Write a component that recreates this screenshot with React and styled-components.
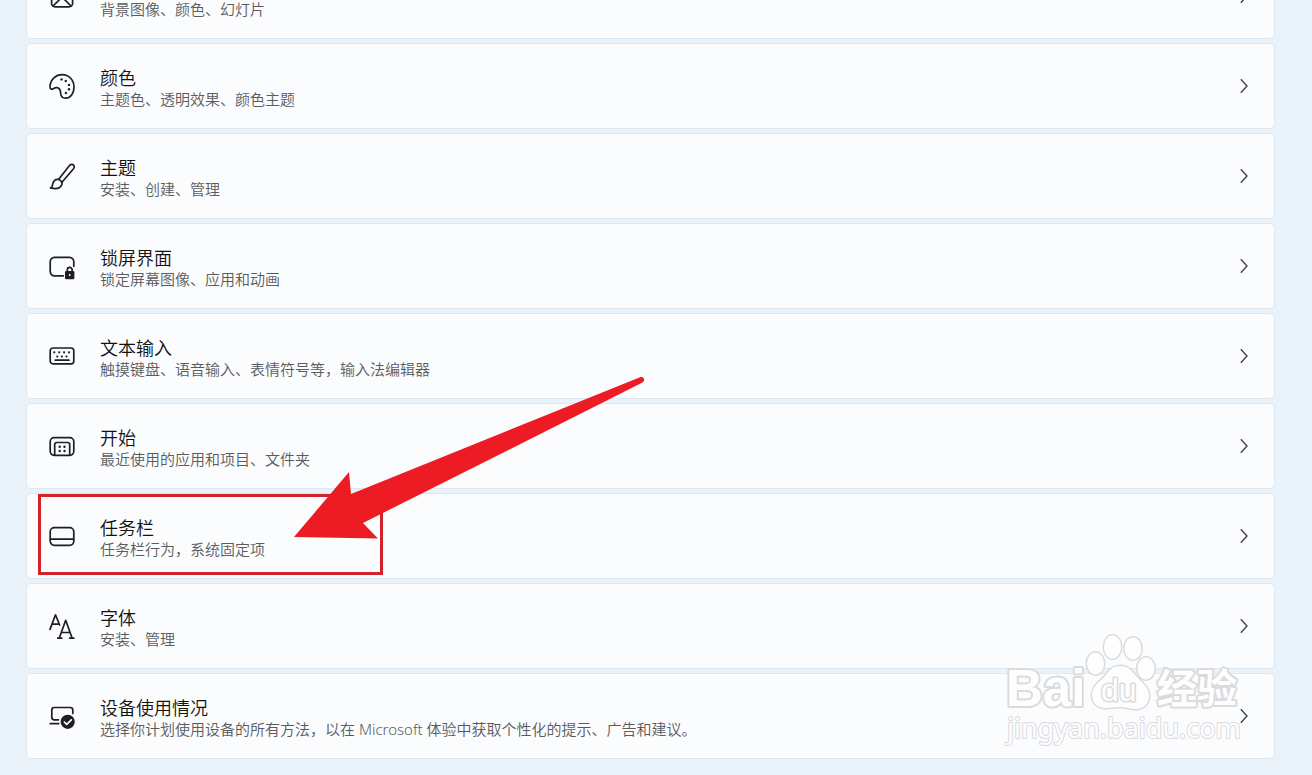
import React from "react";
import styled, { createGlobalStyle } from "styled-components";

const GlobalStyle = createGlobalStyle`
  *, *::before, *::after { box-sizing: border-box; }
  html { background: #ebf3fa; }
  body {
    margin: 0;
    overflow: hidden;
    background: #ebf3fa;
    font-family: "Noto Sans", "Noto Sans CJK SC", sans-serif;
  }
`;

const Page = styled.main`
  padding: 0 37px 16px 26px;
`;

/* The list is scrolled so that its first row is partly out of view. */
const SettingsList = styled.ul`
  display: flex;
  flex-direction: column;
  gap: 4px;
  margin: -47px 0 0;
  padding: 0;
  list-style: none;
`;

const Item = styled.li`
  position: relative;
`;

const Row = styled.button`
  display: flex;
  align-items: center;
  gap: 24px;
  width: 100%;
  min-height: 86px;
  padding: 0 26px 0 21px;
  border: 1px solid #e0e8ef;
  border-radius: 5px;
  background: #fbfcfe;
  color: #111111;
  font: inherit;
  text-align: left;
`;

const Icon = styled.svg`
  flex: none;
  width: 28px;
  height: 28px;
  fill: none;
  stroke: #1d1f22;
  stroke-width: 1.7;
  stroke-linecap: round;
  stroke-linejoin: round;

  .solid {
    fill: #1d1f22;
    stroke: none;
  }
`;

const Texts = styled.span`
  display: flex;
  flex: 1;
  flex-direction: column;
  min-width: 0;
  padding-top: 4px;
`;

const Title = styled.span`
  font-size: 18px;
  font-weight: 350;
  line-height: 22px;
`;

const Description = styled.span`
  color: #5a5b5d;
  font-size: 15px;
  font-weight: 350;
  line-height: 20px;
`;

const Chevron = styled.svg`
  flex: none;
  width: 8px;
  height: 16px;
  fill: none;
  stroke: #444648;
  stroke-width: 1.4;
`;

const Highlight = styled.span`
  position: absolute;
  top: 1px;
  left: 12px;
  width: 345px;
  height: 81px;
  border: 3px solid #d2232a;
  pointer-events: none;
`;

const Arrow = styled.svg`
  position: absolute;
  top: -118px;
  left: 264px;
  width: 360px;
  height: 170px;
  fill: #ed1c24;
  pointer-events: none;
`;

const Watermark = styled.svg`
  position: absolute;
  right: 25px;
  bottom: 4px;
  width: 250px;
  height: 130px;
  fill: #fefeff;
  stroke: #d9dbdd;
  stroke-width: 3;
  stroke-linejoin: round;
  paint-order: stroke;
  pointer-events: none;

  .brand {
    font: 700 51px "Liberation Sans", sans-serif;
    stroke-width: 4;
  }
  .inner {
    font: 400 32px "Liberation Sans", sans-serif;
    stroke-width: 3;
  }
  .section {
    font: 700 40px "Noto Sans CJK SC", sans-serif;
    stroke-width: 4;
  }
  .site {
    font: 400 27px "Noto Sans", sans-serif;
    stroke-width: 2;
  }
`;

const Dots = ({ points, r = 1.1 }) =>
  points.map(([x, y]) => <circle key={`${x}-${y}`} className="solid" cx={x} cy={y} r={r} />);

const icons = {
  background: (
    <>
      <rect x="3.6" y="4" width="21" height="20.8" rx="3.6" />
      <path d="M5 24 12.4 16.8q1.7-1.5 3.4 0L23 24" />
      <circle cx="18.5" cy="10" r="1.8" />
    </>
  ),
  colors: (
    <>
      <path d="M2 14.5C2.4 7.2 8 2.7 14 2.7c7 0 12 5.3 12 12.3 0 6.5-3.4 11.2-8.5 11.2-3.5 0-4.7-2.2-4.9-5.2-.2-3.5-1.4-5.4-4-5.3C5.5 15.9 4.5 17.9 3 17c-.9-.6-1-1.5-1-2.5Z" />
      <Dots points={[[13.5, 7.4], [17.8, 9], [21, 12.9], [21, 17.2], [17.9, 21]]} r={1.2} />
    </>
  ),
  themes: (
    <>
      <path d="M10.7 17.2 21.3 3.8c1.2-1.5 3-1.9 4.2-.8 1.1 1.1.9 2.6-.2 4L14.2 20" />
      <path d="M2.5 25.9c2.3-.5 1.8-2.9 2.4-4.6.9-2.8 3.3-4.3 5.8-3.8 2.6.7 4 3.5 2.9 5.7-1.7 3.5-6.2 4-11.1 2.7Z" />
    </>
  ),
  lockScreen: (
    <>
      <path d="M15.3 23.8H6.5A4.3 4.3 0 0 1 2.2 19.5V9.7a4.3 4.3 0 0 1 4.3-4.3h15a4.3 4.3 0 0 1 4.3 4.3v4.5" />
      <path d="M19.3 20v-2.2a2.4 2.4 0 0 1 4.8 0V20" />
      <rect className="solid" x="17" y="19" width="9.4" height="8.2" rx="1.2" />
      <circle cx="21.7" cy="23" r="0.9" fill="#fff" stroke="none" />
    </>
  ),
  typing: (
    <>
      <rect x="2.2" y="6" width="23.6" height="15.8" rx="2.8" />
      <Dots points={[[6.3, 10.3], [11.2, 10.3], [16.1, 10.3], [21, 10.3], [9.3, 14.5], [13.9, 14.5], [18.5, 14.5]]} />
      <path d="M7.3 18.2H21" />
    </>
  ),
  start: (
    <>
      <rect x="2.2" y="5.6" width="23.6" height="17.7" rx="4" />
      <path d="M6.7 23V12.5a2 2 0 0 1 2-2h11a2 2 0 0 1 2 2V23" />
      <Dots points={[[11.7, 14.7], [16.5, 14.7], [11.7, 19], [16.5, 19]]} r={1.2} />
    </>
  ),
  taskbar: (
    <>
      <rect x="2.2" y="5.6" width="23.6" height="17.7" rx="4.2" />
      <path d="M2.5 17.2h23" />
    </>
  ),
  fonts: (
    <>
      <path d="M2 17.4 7.5 2.8 11.6 13M4.3 12.2h6.8" />
      <path d="m11.3 26 6.4-17.7L24.1 26M13.3 20.5h8.8M9.7 26.2h4M21.7 26.2h4.2" />
    </>
  ),
  deviceUsage: (
    <>
      <path d="M10.5 17.8H6.3a2.5 2.5 0 0 1-2.5-2.5V8a2.5 2.5 0 0 1 2.5-2.5h16A2.5 2.5 0 0 1 24.8 8v3.5M2.2 21.7h8.5" />
      <circle className="solid" cx="19.7" cy="19.8" r="7.1" />
      <path d="m16.3 20 2.4 2.4 4.6-4.6" stroke="#fff" />
    </>
  ),
};

const settings = [
  { icon: "background", title: "背景", description: "背景图像、颜色、幻灯片" },
  { icon: "colors", title: "颜色", description: "主题色、透明效果、颜色主题" },
  { icon: "themes", title: "主题", description: "安装、创建、管理" },
  { icon: "lockScreen", title: "锁屏界面", description: "锁定屏幕图像、应用和动画" },
  { icon: "typing", title: "文本输入", description: "触摸键盘、语音输入、表情符号等，输入法编辑器" },
  { icon: "start", title: "开始", description: "最近使用的应用和项目、文件夹" },
  { icon: "taskbar", title: "任务栏", description: "任务栏行为，系统固定项", marked: true },
  { icon: "fonts", title: "字体", description: "安装、管理" },
  {
    icon: "deviceUsage",
    title: "设备使用情况",
    description: "选择你计划使用设备的所有方法，以在 Microsoft 体验中获取个性化的提示、广告和建议。",
    watermark: true,
  },
];

function BaiduWatermark() {
  return (
    <Watermark viewBox="0 0 250 130">
      <ellipse cx="95.5" cy="38.5" rx="8.5" ry="11" />
      <ellipse cx="112.5" cy="22" rx="8.5" ry="11.5" />
      <ellipse cx="133" cy="23.5" rx="8.5" ry="11" />
      <ellipse cx="146" cy="43.5" rx="8.5" ry="11" />
      <path d="M120 41c-8 0-11 5-15 10-5 6-13 10-13 19 0 8 6 13 13 13 5 0 9-1 15-1s10 2 16 2c7 0 13-5 13-13 0-9-7-13-13-20-4-5-8-10-16-10Z" />
      <text className="brand" x="6" y="81">Bai</text>
      <text className="inner" x="101" y="76">du</text>
      <text className="section" x="157" y="78">经验</text>
      <text className="site" x="7" y="113">jingyan.baidu.com</text>
    </Watermark>
  );
}

function SettingItem({ icon, title, description, marked, watermark }) {
  return (
    <Item>
      <Row type="button">
        <Icon viewBox="0 0 28 28" aria-hidden="true">{icons[icon]}</Icon>
        <Texts>
          <Title>{title}</Title>
          <Description>{description}</Description>
        </Texts>
        <Chevron viewBox="0 0 8 16" aria-hidden="true">
          <path d="m.8 1.3 6.2 6.7-6.2 6.7" />
        </Chevron>
      </Row>
      {marked && (
        <>
          <Highlight />
          <Arrow viewBox="0 0 360 170" aria-hidden="true">
            <path d="M4 162 59 97 61 119 350 2.2C354 1 356 6 352 7.8L73 148 88 163.5Z" />
          </Arrow>
        </>
      )}
      {watermark && <BaiduWatermark />}
    </Item>
  );
}

export default function App() {
  return (
    <>
      <GlobalStyle />
      <Page>
        <SettingsList>
          {settings.map((item) => (
            <SettingItem key={item.icon} {...item} />
          ))}
        </SettingsList>
      </Page>
    </>
  );
}
